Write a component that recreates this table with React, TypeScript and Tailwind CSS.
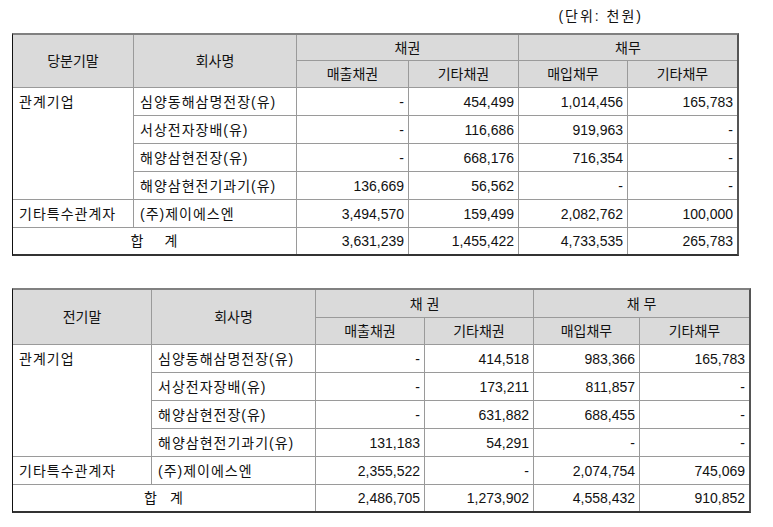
import React from "react";

type C = {
  t: React.ReactNode;
  cs?: number;
  rs?: number;
  align?: "l" | "r" | "c";
  hdr?: boolean;
  noR?: boolean;
  noB?: boolean;
  num?: boolean;
  top?: boolean;
};

function Cell({ t, cs, rs, align = "l", hdr, noR, noB, num, top }: C) {
  const cls = [
    "border-[#9a9a9a] p-0 font-normal",
    noR ? "" : "border-r",
    noB ? "" : "border-b",
    hdr ? "bg-[#dadada]" : "bg-white",
    align === "l" ? "text-left pl-[6px]" : align === "r" ? "text-right pr-[4px]" : "text-center",
    top ? "align-top pt-[7px]" : "align-middle",
    num || hdr ? "tracking-normal" : "tracking-[1px]",
  ].join(" ");
  if (hdr) {
    return (
      <th colSpan={cs} rowSpan={rs} className={cls}>
        {t}
      </th>
    );
  }
  return (
    <td colSpan={cs} rowSpan={rs} className={cls}>
      {t}
    </td>
  );
}

type Row = { name: string; v: string[] };

function Table({
  label,
  cols,
  h1,
  headTop,
  gapCls,
  rows,
  total,
}: {
  label: string;
  cols: string[];
  h1: string;
  headTop: [string, string];
  gapCls: string;
  rows: Row[];
  total: string[];
}) {
  return (
    <div className="border-t-2 border-t-[#808080] border-l border-l-[#111] border-r-2 border-r-[#555] border-b-2 border-b-[#333] w-fit">
      <table className="table-fixed border-separate border-spacing-0 text-[14px] leading-none text-[#111]">
        <colgroup>
          {cols.map((c, i) => (
            <col key={i} className={c} />
          ))}
        </colgroup>
        <thead>
          <tr className={h1}>
            <Cell t={label} rs={2} align="c" hdr />
            <Cell t="회사명" rs={2} align="c" hdr />
            <Cell t={headTop[0]} cs={2} align="c" hdr />
            <Cell t={headTop[1]} cs={2} align="c" hdr noR />
          </tr>
          <tr className="h-[27px]">
            <Cell t="매출채권" align="c" hdr />
            <Cell t="기타채권" align="c" hdr />
            <Cell t="매입채무" align="c" hdr />
            <Cell t="기타채무" align="c" hdr noR />
          </tr>
        </thead>
        <tbody>
          {rows.map((r, i) => (
            <tr key={i} className="h-[28px]">
              {i === 0 && <Cell t="관계기업" rs={4} top />}
              {i === 4 && <Cell t="기타특수관계자" />}
              <Cell t={r.name} />
              {r.v.map((v, j) => (
                <Cell key={j} t={v} align="r" num noR={j === 3} />
              ))}
            </tr>
          ))}
          <tr className="h-[26px]">
            <Cell
              t={
                <span className={"flex justify-center " + gapCls}>
                  <span>합</span>
                  <span>계</span>
                </span>
              }
              cs={2}
              align="c"
              noB
            />
            {total.map((v, j) => (
              <Cell key={j} t={v} align="r" num noB noR={j === 3} />
            ))}
          </tr>
        </tbody>
      </table>
    </div>
  );
}

export default function App() {
  return (
    <div className="w-[773px] h-[527px] bg-white pl-[12px] font-['Liberation_Sans','Noto_Sans_CJK_KR',sans-serif]">
      <div className="flex justify-end pr-[130px] pt-[9px] h-[33px] text-[14px] leading-none tracking-[2px] text-[#111]">
        (단위: 천원)
      </div>
      <Table
        label="당분기말"
        cols={["w-[121px]", "w-[163px]", "w-[112px]", "w-[110px]", "w-[109px]", "w-[109px]"]}
        h1="h-[26px]"
        headTop={["채권", "채무"]}
        gapCls="gap-[20px]"
        rows={[
          { name: "심양동해삼명전장(유)", v: ["-", "454,499", "1,014,456", "165,783"] },
          { name: "서상전자장배(유)", v: ["-", "116,686", "919,963", "-"] },
          { name: "해양삼현전장(유)", v: ["-", "668,176", "716,354", "-"] },
          { name: "해양삼현전기과기(유)", v: ["136,669", "56,562", "-", "-"] },
          { name: "(주)제이에스엔", v: ["3,494,570", "159,499", "2,082,762", "100,000"] },
        ]}
        total={["3,631,239", "1,455,422", "4,733,535", "265,783"]}
      />
      <div className="h-[32px]" />
      <Table
        label="전기말"
        cols={["w-[139px]", "w-[164px]", "w-[109px]", "w-[109px]", "w-[106px]", "w-[109px]"]}
        h1="h-[28px]"
        headTop={["채 권", "채 무"]}
        gapCls="gap-[12px]"
        rows={[
          { name: "심양동해삼명전장(유)", v: ["-", "414,518", "983,366", "165,783"] },
          { name: "서상전자장배(유)", v: ["-", "173,211", "811,857", "-"] },
          { name: "해양삼현전장(유)", v: ["-", "631,882", "688,455", "-"] },
          { name: "해양삼현전기과기(유)", v: ["131,183", "54,291", "-", "-"] },
          { name: "(주)제이에스엔", v: ["2,355,522", "-", "2,074,754", "745,069"] },
        ]}
        total={["2,486,705", "1,273,902", "4,558,432", "910,852"]}
      />
    </div>
  );
}
